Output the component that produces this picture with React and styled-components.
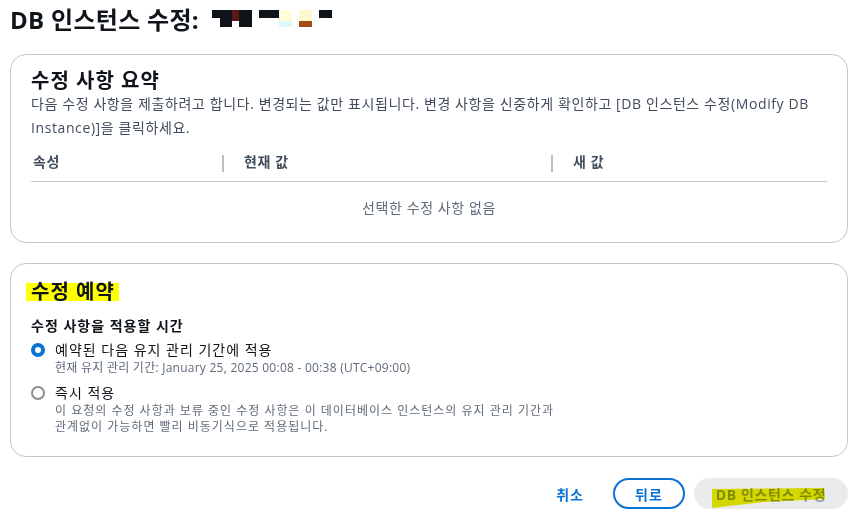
import React from "react";
import styled, { createGlobalStyle } from "styled-components";

const Global = createGlobalStyle`
  html, body { margin: 0; padding: 0; background: #ffffff; }
  body {
    font-family: "Open Sans", "Noto Sans CJK KR", sans-serif;
    color: #0f141a;
    -webkit-font-smoothing: antialiased;
  }
  * { box-sizing: border-box; }
`;

const Page = styled.div`
  width: 855px;
  height: 521px;
  padding: 0 7px 0 10px;
  display: flex;
  flex-direction: column;
  overflow: hidden;
`;

const TitleRow = styled.div`
  display: flex;
  align-items: center;
  gap: 12px;
  height: 40px;
  margin-bottom: 14px;
`;

const Title = styled.h1`
  margin: 0;
  font-size: 24px;
  font-weight: 700;
  line-height: 40px;
  letter-spacing: 0.3px;
`;

const RedactGroup = styled.div`
  display: flex;
  align-items: flex-start;
  height: 17px;
  margin-top: -3px;
`;

const RedactRow = styled.div`
  display: flex;
`;

const Redact = styled.span`
  display: inline-block;
  width: ${(p) => p.w}px;
  height: ${(p) => p.h}px;
  margin-left: ${(p) => p.ml || 0}px;
  background: ${(p) => p.c};
`;

const RedactStack = styled.div`
  display: flex;
  flex-direction: column;
  margin-left: ${(p) => p.ml || 0}px;
`;

const Card = styled.section`
  border: 1px solid #c6c6cd;
  border-radius: 16px;
  padding: ${(p) => p.pad};
  background: #fff;
  margin-bottom: ${(p) => p.mb || 0}px;
`;

const CardTitle = styled.h2`
  margin: 0;
  font-size: 20px;
  font-weight: 700;
  line-height: 22px;
  letter-spacing: 1px;
  color: #0f141a;
`;

const Highlight = styled.span`
  display: inline-block;
  background: #ffff00;
  height: 18px;
  line-height: 18px;
  padding: 0 4px 0 5px;
  margin-left: -5px;
`;

const Desc = styled.p`
  margin: 0;
  font-size: 14px;
  line-height: 24px;
  letter-spacing: 0.6px;
  color: #414d5c;
`;

const Table = styled.div`
  margin-top: 4px;
  display: grid;
  grid-template-columns: 191px 329px 1fr;
`;

const HeadCell = styled.div`
  position: relative;
  height: 38px;
  display: flex;
  align-items: center;
  padding: 0 0 4px ${(p) => (p.first ? 2 : 22)}px;
  font-size: 14px;
  font-weight: 700;
  letter-spacing: 0.6px;
  color: #414d5c;
  border-bottom: 1px solid #c6c6cd;

  &::before {
    content: "";
    display: ${(p) => (p.first ? "none" : "block")};
    position: absolute;
    left: 0;
    top: 11px;
    width: 2px;
    height: 17px;
    background: #b6bec9;
  }
`;

const EmptyRow = styled.div`
  grid-column: 1 / -1;
  text-align: center;
  font-size: 14px;
  line-height: 20px;
  letter-spacing: 0.6px;
  color: #5f6b7a;
  padding: 16px 0 16px;
`;

const FieldLabel = styled.div`
  margin-top: 13px;
  font-size: 14px;
  font-weight: 600;
  line-height: 20px;
  letter-spacing: 1px;
  color: #0f141a;
`;

const Options = styled.div`
  display: flex;
  flex-direction: column;
  gap: 7px;
  margin-top: 4px;
`;

const Option = styled.label`
  display: grid;
  grid-template-columns: 14px 1fr;
  column-gap: 10px;
  align-items: start;
`;

const Radio = styled.span`
  width: 14px;
  height: 14px;
  margin-top: 3px;
  border-radius: 50%;
  border: ${(p) => (p.checked ? "4px solid #0972d3" : "2px solid #8c8c94")};
  background: #fff;
`;

const OptionText = styled.div`
  display: flex;
  flex-direction: column;
`;

const OptionLabel = styled.span`
  font-size: 14px;
  line-height: 20px;
  letter-spacing: 1px;
  color: #0f141a;
`;

const OptionDesc = styled.span`
  font-size: 12px;
  line-height: 16px;
  letter-spacing: ${(p) => p.ls || 1}px;
  color: #5f6b7a;
`;

const Actions = styled.div`
  display: flex;
  justify-content: flex-end;
  align-items: center;
  gap: 9px;
  margin-top: 21px;
`;

const LinkButton = styled.button`
  border: none;
  background: none;
  font-family: inherit;
  font-size: 14px;
  font-weight: 700;
  letter-spacing: 1px;
  color: #0972d3;
  padding: 0 20px;
  height: 31px;
  margin-right: 0;
`;

const OutlineButton = styled.button`
  font-family: inherit;
  font-size: 14px;
  font-weight: 700;
  letter-spacing: 1px;
  color: #0972d3;
  background: #fff;
  border: 2px solid #0972d3;
  border-radius: 20px;
  width: 72px;
  height: 31px;
  padding: 0;
`;

const PrimaryButton = styled.button`
  position: relative;
  font-family: inherit;
  font-size: 14px;
  font-weight: 700;
  letter-spacing: 0.6px;
  color: #8d99a8;
  background: #e9ebed;
  border: none;
  border-radius: 20px;
  width: 154px;
  height: 31px;
  padding: 0;
`;

const Marker = styled.svg`
  position: absolute;
  left: 0;
  top: 0;
  width: 154px;
  height: 31px;
  mix-blend-mode: multiply;
  pointer-events: none;
`;

export default function App() {
  return (
    <>
      <Global />
      <Page>
        <TitleRow>
          <Title>DB 인스턴스 수정:</Title>
          <RedactGroup>
            <RedactStack ml={1}>
              <RedactRow>
                <Redact w={20} h={8} c="#0f141a" />
                <Redact w={7} h={8} c="#5e1717" />
                <Redact w={13} h={8} c="#0f141a" />
              </RedactRow>
              <RedactRow>
                <Redact w={8} h={9} c="#ffffff" />
                <Redact w={12} h={9} c="#0f141a" />
                <Redact w={7} h={3} c="#5e1717" />
                <Redact w={13} h={9} c="#0f141a" />
              </RedactRow>
            </RedactStack>
            <Redact w={20} h={8} c="#0f141a" ml={7} />
            <RedactStack>
              <Redact w={13} h={11} c="#fffcdc" />
              <Redact w={13} h={6} c="#dcfafc" />
            </RedactStack>
            <RedactStack ml={7}>
              <Redact w={13} h={11} c="#fff8cf" />
              <Redact w={13} h={6} c="#a24c15" />
            </RedactStack>
            <Redact w={13} h={8} c="#0f141a" ml={7} />
          </RedactGroup>
        </TitleRow>

        <Card pad="15px 20px 8px 20px" mb={20}>
          <CardTitle>수정 사항 요약</CardTitle>
          <Desc>
            다음 수정 사항을 제출하려고 합니다. 변경되는 값만 표시됩니다. 변경
            사항을 신중하게 확인하고 [DB 인스턴스 수정(Modify DB Instance)]을
            클릭하세요.
          </Desc>
          <Table>
            <HeadCell first>속성</HeadCell>
            <HeadCell>현재 값</HeadCell>
            <HeadCell>새 값</HeadCell>
            <EmptyRow>선택한 수정 사항 없음</EmptyRow>
          </Table>
        </Card>

        <Card pad="17px 20px 21px 20px">
          <CardTitle>
            <Highlight>수정 예약</Highlight>
          </CardTitle>
          <FieldLabel>수정 사항을 적용할 시간</FieldLabel>
          <Options>
            <Option>
              <Radio checked />
              <OptionText>
                <OptionLabel>예약된 다음 유지 관리 기간에 적용</OptionLabel>
                <OptionDesc ls={0.25}>
                  현재 유지 관리 기간: January 25, 2025 00:08 - 00:38
                  (UTC+09:00)
                </OptionDesc>
              </OptionText>
            </Option>
            <Option>
              <Radio />
              <OptionText>
                <OptionLabel>즉시 적용</OptionLabel>
                <OptionDesc ls={1}>
                  이 요청의 수정 사항과 보류 중인 수정 사항은 이 데이터베이스
                  인스턴스의 유지 관리 기간과
                  <br />
                  관계없이 가능하면 빨리 비동기식으로 적용됩니다.
                </OptionDesc>
              </OptionText>
            </Option>
          </Options>
        </Card>

        <Actions>
          <LinkButton>취소</LinkButton>
          <OutlineButton>뒤로</OutlineButton>
          <PrimaryButton>
            DB 인스턴스 수정
            <Marker viewBox="0 0 154 31">
              <path
                d="M18 11 L130 10 L131 21 L70 24 L18 30 Z"
                fill="#eaea00"
              />
            </Marker>
          </PrimaryButton>
        </Actions>
      </Page>
    </>
  );
}
